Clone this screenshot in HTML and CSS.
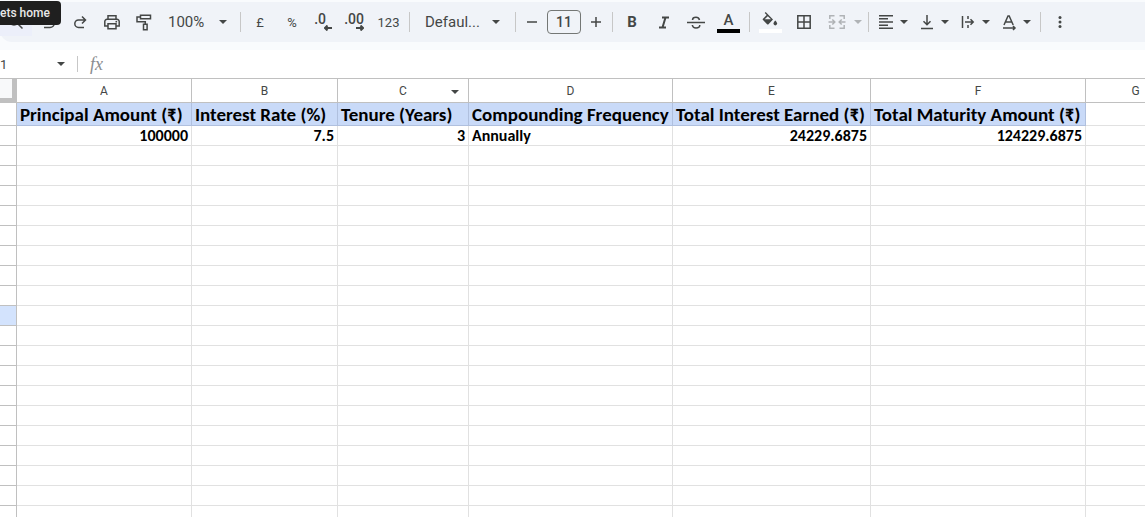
FILE: index.html
```html
<!DOCTYPE html>
<html lang="en">
<head>
    <meta charset="UTF-8">
    <meta name="viewport" content="width=device-width, initial-scale=1.0">
    <title>Compound Interest - Sheets</title>
    <link rel="stylesheet" href="styles.css">
</head>
<body>
    <div class="app">
        <header class="toolbar-area">
            <div class="toolbar" role="toolbar" aria-label="Main">
                <button class="tool tool-hover" aria-label="Search the menus"><svg class="icon" viewBox="0 0 20 20"><circle cx="8" cy="8" r="5"/><path d="M11.500 11.500l5 5"/></svg></button>
                <button class="tool" aria-label="Undo"><svg class="icon" viewBox="0 0 20 20"><path d="M7 3.500L3.500 7 7 10.500M4 7h8a4 4 0 0 1 0 8.500H6"/></svg></button>
                <button class="tool" aria-label="Redo"><svg class="icon" viewBox="0 0 20 20"><path d="M12 4.500l3.500 3.500-3.500 3.500M15 8H8.500a3.700 3.700 0 0 0 0 7.400H14"/></svg></button>
                <button class="tool" aria-label="Print"><svg class="icon" viewBox="0 0 20 20"><path d="M6 7V3.700h8V7M5.500 14H2.800V9.500A2.200 2.200 0 0 1 5 7.300h10a2.200 2.200 0 0 1 2.200 2.200V14h-2.700M6 11.700h8v5H6z"/><circle class="solid" cx="14.300" cy="9.700" r=".9"/></svg></button>
                <button class="tool" aria-label="Paint format"><svg class="icon" viewBox="0 0 20 20"><path d="M6.500 3.200h10v3.500h-10zM6.500 4.900H3v4.800h8.300V12M9.500 12.200h3.600v5.500H9.500z"/></svg></button>
                <label class="picker zoom-picker"><select aria-label="Zoom"><option>100%</option></select><svg class="arrow" viewBox="0 0 8 4"><path d="M0 0h8L4 4z"/></svg></label>
                <span class="divider"></span>
                <button class="tool tool-text">£</button>
                <button class="tool tool-text">%</button>
                <button class="tool decimal" aria-label="Decrease decimal places"><span class="short">.0</span><svg class="shift" viewBox="0 0 8 6"><path d="M8 3H1M3.500 .5L1 3l2.500 2.500"/></svg></button>
                <button class="tool decimal" aria-label="Increase decimal places"><span>.00</span><svg class="shift" viewBox="0 0 8 6"><path d="M0 3h7M4.500 .5L7 3 4.500 5.500"/></svg></button>
                <button class="tool tool-text tool-wide">123</button>
                <span class="divider"></span>
                <label class="picker font-picker"><select aria-label="Font"><option>Defaul...</option></select><svg class="arrow" viewBox="0 0 8 4"><path d="M0 0h8L4 4z"/></svg></label>
                <span class="divider"></span>
                <button class="tool step" aria-label="Decrease font size"><svg class="icon" viewBox="0 0 20 20"><path d="M5 10h10"/></svg></button>
                <input class="font-size" aria-label="Font size" value="11">
                <button class="tool step" aria-label="Increase font size"><svg class="icon" viewBox="0 0 20 20"><path d="M5 10h10M10 5v10"/></svg></button>
                <span class="divider"></span>
                <button class="tool letter">B</button>
                <button class="tool" aria-label="Italic"><svg class="icon heavy" viewBox="0 0 20 20"><path d="M8 5.500h7M5 15.500h7M11.500 5.500L8.500 15.500"/></svg></button>
                <button class="tool" aria-label="Strikethrough"><svg class="icon" viewBox="0 0 20 20"><path d="M1 10.500h18M13.500 8C13 6.200 12 5.300 10 5.300c-2.200 0-3.500 1-3.500 2.700M6.300 13c.3 2 1.700 3 3.700 3 2.300 0 3.800-1.200 3.800-3"/></svg></button>
                <button class="tool tool-wide colour" aria-label="Text colour"><span>A</span><i class="swatch black"></i></button>
                <span class="divider"></span>
                <button class="tool tool-broad colour" aria-label="Fill colour"><svg class="bucket" viewBox="0 0 16 14"><path class="solid" d="M3.700 0L2.700 1l2 2L1 6.700a1 1 0 0 0 0 1.400L5.100 12.200a1 1 0 0 0 1.400 0L11 7.500zM5.800 4.200L9 7.300H2.700z"/><path class="solid" d="M13.300 8.500s-1.800 1.900-1.800 3.100a1.800 1.800 0 0 0 3.600 0c0-1.200-1.800-3.100-1.800-3.100z"/></svg><i class="swatch white"></i></button>
                <button class="tool tool-broad" aria-label="Borders"><svg class="icon" viewBox="0 0 20 20"><path d="M3.800 3.800h12.400v12.400H3.800zM10 4v12M4 10h12"/></svg></button>
                <button class="tool menu merge" aria-label="Merge cells" disabled><svg class="icon" viewBox="0 0 20 20"><path d="M7.500 3.800H2.800V7M12.500 3.800h4.700V7M2.800 13v3.200h4.700M17.200 13v3.200h-4.700M1.500 10h6M5.300 7.500L7.800 10l-2.500 2.500M18.500 10h-6M14.700 7.500L12.200 10l2.500 2.500"/></svg><svg class="arrow" viewBox="0 0 8 4"><path d="M0 0h8L4 4z"/></svg></button>
                <span class="divider"></span>
                <button class="tool menu" aria-label="Horizontal align"><svg class="icon" viewBox="0 0 20 20"><path d="M3 3.700h14M3 6.800h9M3 10h14M3 13.200h9M3 16.300h14"/></svg><svg class="arrow" viewBox="0 0 8 4"><path d="M0 0h8L4 4z"/></svg></button>
                <button class="tool menu" aria-label="Vertical align"><svg class="icon" viewBox="0 0 20 20"><path d="M10 3v9.500M6.500 9.300l3.500 3.500 3.500-3.500M4 16.500h12"/></svg><svg class="arrow" viewBox="0 0 8 4"><path d="M0 0h8L4 4z"/></svg></button>
                <button class="tool menu" aria-label="Text wrapping"><svg class="icon" viewBox="0 0 20 20"><path d="M4.500 4v12M10 4v3M10 13v3M7 10h8M12.500 7.300l2.700 2.700-2.700 2.700"/></svg><svg class="arrow" viewBox="0 0 8 4"><path d="M0 0h8L4 4z"/></svg></button>
                <button class="tool menu" aria-label="Text rotation"><svg class="icon" viewBox="0 0 20 20"><path d="M5 13l4-9h1.200l4 9M6.500 10h6.200M4 16h12M14 14l2 2-2 2"/></svg><svg class="arrow" viewBox="0 0 8 4"><path d="M0 0h8L4 4z"/></svg></button>
                <span class="divider"></span>
                <button class="tool" aria-label="More"><svg class="icon" viewBox="0 0 20 20"><circle class="solid" cx="10" cy="5.500" r="1.500"/><circle class="solid" cx="10" cy="10" r="1.500"/><circle class="solid" cx="10" cy="14.500" r="1.500"/></svg></button>
            </div>
            <div class="tooltip" role="tooltip">ets home</div>
        </header>

        <div class="formula-bar">
            <input class="name-box" aria-label="Name box" value="1">
            <svg class="arrow" viewBox="0 0 8 4"><path d="M0 0h8L4 4z"/></svg>
            <span class="divider"></span>
            <label class="fx" for="formula">fx</label>
            <input id="formula" class="formula">
        </div>

        <main class="sheet">
            <table>
                <colgroup>
                    <col class="col-rows"><col class="col-a"><col class="col-b"><col class="col-c"><col class="col-d"><col class="col-e"><col class="col-f"><col class="col-g">
                </colgroup>
                <thead>
                    <tr>
                        <td class="corner"></td>
                        <th scope="col">A</th>
                        <th scope="col">B</th>
                        <th scope="col"><div class="col-menu">C<svg class="arrow" viewBox="0 0 8 4"><path d="M0 0h8L4 4z"/></svg></div></th>
                        <th scope="col">D</th>
                        <th scope="col">E</th>
                        <th scope="col">F</th>
                        <th scope="col">G</th>
                    </tr>
                </thead>
                <tbody>
                    <tr class="titles">
                        <th></th><td>Principal Amount (₹)</td><td>Interest Rate (%)</td><td>Tenure (Years)</td><td>Compounding Frequency</td><td>Total Interest Earned (₹)</td><td>Total Maturity Amount (₹)</td><td></td>
                    </tr>
                    <tr>
                        <th></th><td class="num">100000</td><td class="num">7.5</td><td class="num">3</td><td>Annually</td><td class="num">24229.6875</td><td class="num">124229.6875</td><td></td>
                    </tr>
                    <tr><th></th><td></td><td></td><td></td><td></td><td></td><td></td><td></td></tr>
                    <tr><th></th><td></td><td></td><td></td><td></td><td></td><td></td><td></td></tr>
                    <tr><th></th><td></td><td></td><td></td><td></td><td></td><td></td><td></td></tr>
                    <tr><th></th><td></td><td></td><td></td><td></td><td></td><td></td><td></td></tr>
                    <tr><th></th><td></td><td></td><td></td><td></td><td></td><td></td><td></td></tr>
                    <tr><th></th><td></td><td></td><td></td><td></td><td></td><td></td><td></td></tr>
                    <tr><th></th><td></td><td></td><td></td><td></td><td></td><td></td><td></td></tr>
                    <tr><th></th><td></td><td></td><td></td><td></td><td></td><td></td><td></td></tr>
                    <tr class="current"><th></th><td></td><td></td><td></td><td></td><td></td><td></td><td></td></tr>
                    <tr><th></th><td></td><td></td><td></td><td></td><td></td><td></td><td></td></tr>
                    <tr><th></th><td></td><td></td><td></td><td></td><td></td><td></td><td></td></tr>
                    <tr><th></th><td></td><td></td><td></td><td></td><td></td><td></td><td></td></tr>
                    <tr><th></th><td></td><td></td><td></td><td></td><td></td><td></td><td></td></tr>
                    <tr><th></th><td></td><td></td><td></td><td></td><td></td><td></td><td></td></tr>
                    <tr><th></th><td></td><td></td><td></td><td></td><td></td><td></td><td></td></tr>
                    <tr><th></th><td></td><td></td><td></td><td></td><td></td><td></td><td></td></tr>
                    <tr><th></th><td></td><td></td><td></td><td></td><td></td><td></td><td></td></tr>
                    <tr><th></th><td></td><td></td><td></td><td></td><td></td><td></td><td></td></tr>
                    <tr><th></th><td></td><td></td><td></td><td></td><td></td><td></td><td></td></tr>
                </tbody>
            </table>
        </main>
    </div>
</body>
</html>
```
FILE: styles.css
```css
* { box-sizing: border-box; }
body { margin: 0; background: #fff; color: #444746; font-family: Roboto, "Liberation Sans", sans-serif; }
button, input, select { font: inherit; color: inherit; border: 0; padding: 0; margin: 0; background: none; }
.app { display: flex; flex-direction: column; height: 100vh; overflow: hidden; }

/* Toolbar */
.toolbar-area { position: relative; flex: none; padding: 2px 0 8px; background: #f9fbfd; overflow: hidden; }
.toolbar { display: flex; align-items: center; height: 40px; background: #f0f3f8; border-radius: 0 0 0 12px; }
.tool { flex: none; display: flex; align-items: center; justify-content: center; width: 32px; height: 28px; }
.tool-wide { width: 33px; }
.tool-broad { width: 34px; }
.tool-hover { background: #eceffa; }
.tool-text { font-size: 13px; }
.icon { width: 20px; height: 20px; fill: none; stroke: currentColor; stroke-width: 1.5; }
.heavy { stroke-width: 2; }
.solid { fill: currentColor; stroke: none; }
.arrow { flex: none; width: 8px; height: 4px; fill: currentColor; }
.divider { flex: none; width: 1px; height: 20px; margin: 0 3px 0 4px; background: #c7c7c7; }
.picker { flex: none; display: flex; align-items: center; font-size: 15px; }
.picker select { flex: 1; min-width: 0; appearance: none; outline: none; }
.zoom-picker { width: 76px; padding: 0 9px 0 8px; }
.font-picker { width: 98px; padding: 0 11px 0 12px; }
.decimal { flex-direction: column; align-items: flex-end; padding-right: 8px; font-size: 14px; font-weight: 500; line-height: 12px; }
.short { margin-right: 6px; }
.shift { width: 8px; height: 6px; fill: none; stroke: currentColor; stroke-width: 2; }
.step { width: 25px; }
.font-size { flex: none; width: 34px; height: 24px; margin: 0 2px 0 3px; border: 1px solid #747775; border-radius: 4px; font-size: 14px; font-weight: 500; text-align: center; }
.letter { font-size: 15px; font-weight: 700; }
.colour { flex-direction: column; font-size: 15px; font-weight: 500; line-height: 16px; }
.swatch { width: 23px; height: 4px; margin-top: 1px; }
.black { background: #000; }
.white { background: #fff; }
.bucket { width: 16px; height: 14px; margin-bottom: 2px; }
.menu { width: 41px; justify-content: flex-start; gap: 4px; padding-left: 4px; }
.merge { width: 43px; gap: 7px; padding-left: 6px; color: #b0b3b6; }
.tooltip { position: absolute; top: 1px; left: 0; width: 61px; height: 24px; background: #1f1f1f; color: #e8e8e8; border-radius: 0 4px 4px 0; font-size: 12px; font-weight: 500; line-height: 24px; }

/* Formula bar */
.formula-bar { flex: none; display: flex; align-items: center; height: 28px; }
.name-box { width: 57px; font-size: 13px; }
.formula-bar .divider { height: 16px; margin: 0 12px; }
.fx { font-family: "Liberation Serif", serif; font-size: 18px; font-style: italic; color: #8a8d90; }
.formula { flex: 1; height: 24px; margin-left: 12px; outline: none; }

/* Grid */
.sheet { flex: 1; min-height: 0; overflow: hidden; border-top: 1px solid #c0c0c0; }
table { table-layout: fixed; width: 1186px; border-collapse: separate; border-spacing: 0; }
.col-rows { width: 17px; }
.col-a { width: 175px; }
.col-b { width: 146px; }
.col-c { width: 131px; }
.col-d { width: 204px; }
.col-e { width: 198px; }
.col-f { width: 215px; }
.col-g { width: 100px; }
th { padding: 0; border: solid #c0c0c0; border-width: 0 1px 1px 0; font-size: 12px; font-weight: 400; line-height: 16px; }
thead tr { height: 24px; }
.corner { background: #f8f9fa; border: solid #c0c0c0; border-width: 0 5px 5px 0; }
.col-menu { position: relative; }
.col-menu .arrow { position: absolute; right: 9px; top: 7px; }
tbody tr { height: 20px; }
td { padding: 0 3px; border: solid #e1e1e1; border-width: 0 1px 1px 0; color: #000; font-family: Carlito, Lato, sans-serif; font-size: 16px; font-weight: 700; line-height: 19px; white-space: nowrap; }
tbody .titles { height: 23px; }
.titles td { padding-top: 2px; background: #c9daf8; border-color: #b0c0de; font-size: 19px; line-height: 20px; }
.titles td:last-child { background: none; border-color: #e1e1e1; }
.num { text-align: right; }
.current th { background: #d3e3fd; }
```
